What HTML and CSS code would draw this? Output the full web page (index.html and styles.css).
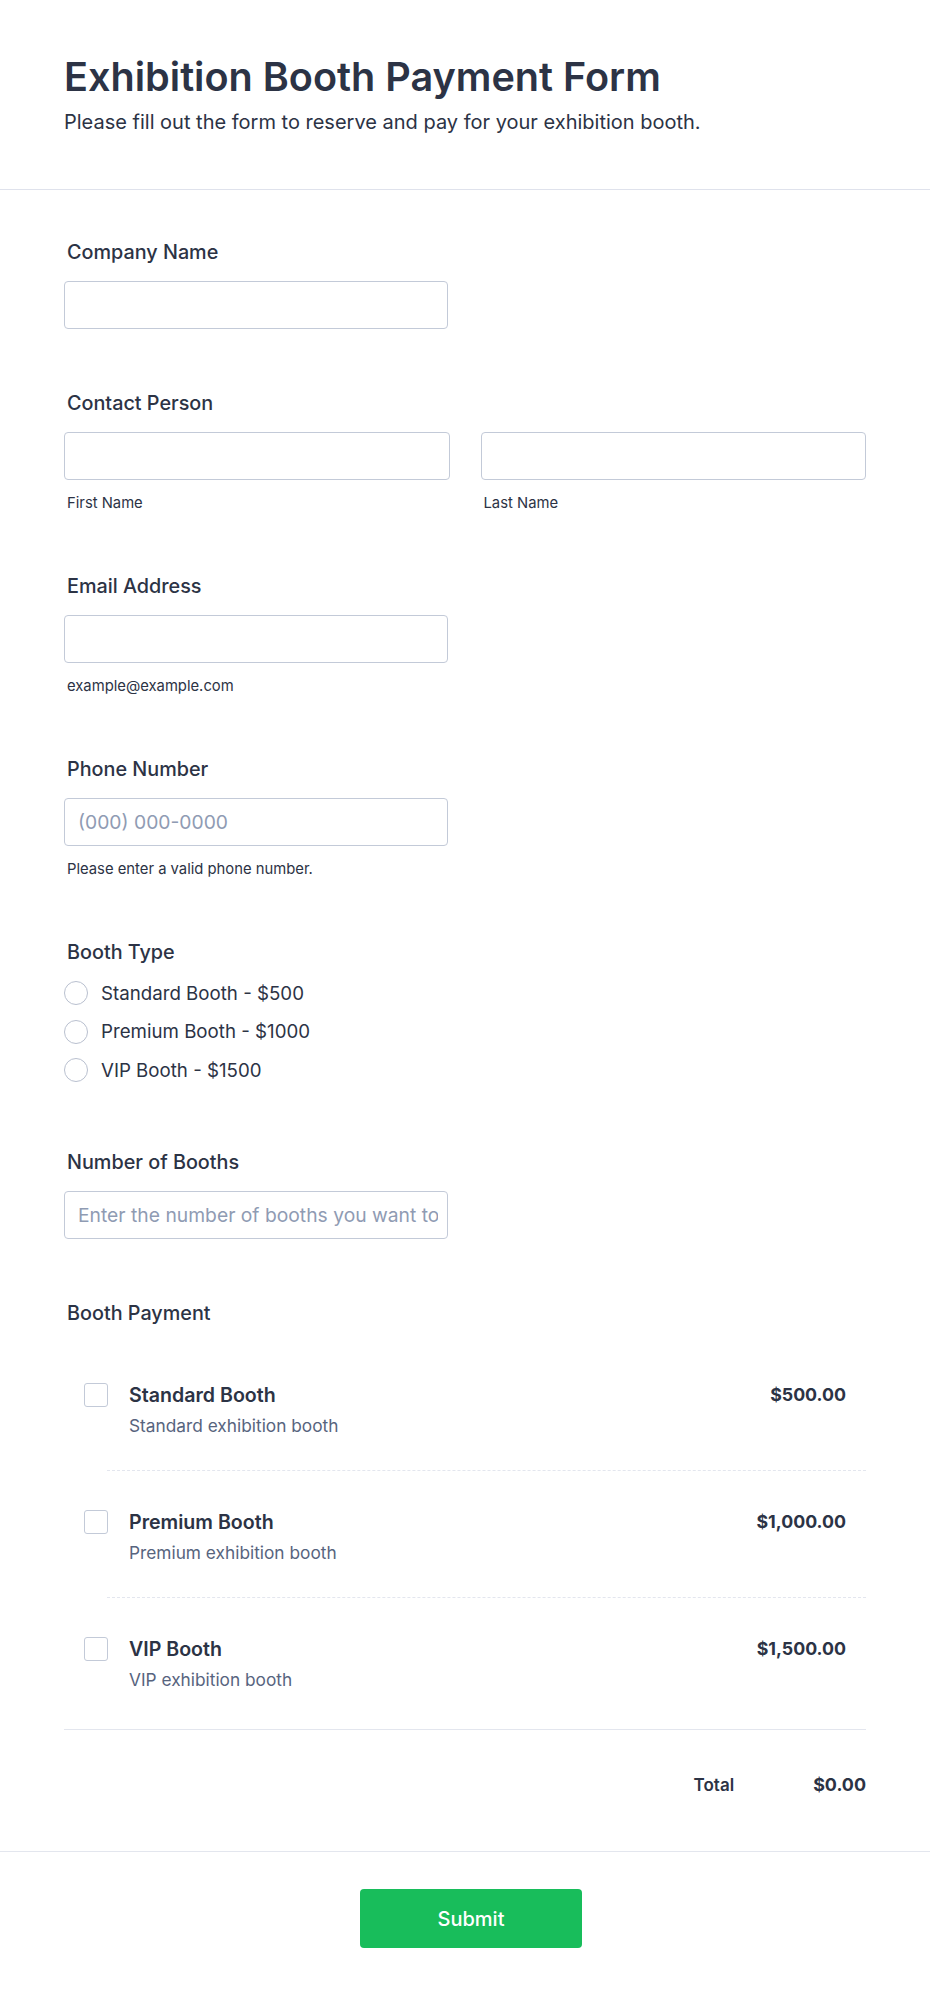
FILE: index.html
```html
<!DOCTYPE html>
<html lang="en">
<head>
<meta charset="utf-8">
<title>Exhibition Booth Payment Form</title>
<link rel="stylesheet" href="styles.css">
</head>
<body>
<header class="header">
  <div class="wrap">
    <h1 class="title">Exhibition Booth Payment Form</h1>
    <p class="subtitle">Please fill out the form to reserve and pay for your exhibition booth.</p>
  </div>
</header>
<main class="form">
  <div class="wrap">
    <div class="field">
      <label class="label">Company Name</label>
      <input class="input" type="text">
    </div>
    <div class="field">
      <label class="label">Contact Person</label>
      <div class="two">
        <div>
          <input class="input input-full" type="text">
          <span class="sub">First Name</span>
        </div>
        <div>
          <input class="input input-full" type="text">
          <span class="sub">Last Name</span>
        </div>
      </div>
    </div>
    <div class="field">
      <label class="label">Email Address</label>
      <input class="input" type="text">
      <span class="sub">example@example.com</span>
    </div>
    <div class="field">
      <label class="label">Phone Number</label>
      <input class="input" type="text" placeholder="(000) 000-0000">
      <span class="sub">Please enter a valid phone number.</span>
    </div>
    <div class="field field-radios">
      <label class="label label-tight">Booth Type</label>
      <div class="radio"><span class="radio-dot"></span><span>Standard Booth - $500</span></div>
      <div class="radio"><span class="radio-dot"></span><span>Premium Booth - $1000</span></div>
      <div class="radio"><span class="radio-dot"></span><span>VIP Booth - $1500</span></div>
    </div>
    <div class="field">
      <label class="label">Number of Booths</label>
      <input class="input input-num" type="text" placeholder="Enter the number of booths you want to reserve">
    </div>
    <div class="payment">
      <label class="label label-pay">Booth Payment</label>
      <div class="items">
        <div class="pitem">
          <span class="check"></span>
          <div class="pinfo">
            <div class="pname">Standard Booth</div>
            <div class="pdesc">Standard exhibition booth</div>
          </div>
          <div class="price">$500.00</div>
        </div>
        <div class="pitem">
          <span class="check"></span>
          <div class="pinfo">
            <div class="pname">Premium Booth</div>
            <div class="pdesc">Premium exhibition booth</div>
          </div>
          <div class="price">$1,000.00</div>
        </div>
        <div class="pitem">
          <span class="check"></span>
          <div class="pinfo">
            <div class="pname">VIP Booth</div>
            <div class="pdesc">VIP exhibition booth</div>
          </div>
          <div class="price">$1,500.00</div>
        </div>
      </div>
      <div class="total">
        <span class="total-label">Total</span>
        <span class="total-value">$0.00</span>
      </div>
    </div>
  </div>
</main>
<footer class="footer">
  <button class="submit" type="button">Submit</button>
</footer>
</body>
</html>
```

FILE: styles.css
```css
body {
  margin: 0;
  font-family: Inter, "Noto Sans", sans-serif;
  color: #2c3345;
  background: #ffffff;
}

.wrap {
  width: 802px;
  margin: 0 auto;
}

.header {
  padding: 53px 0 53px;
  border-bottom: 1px solid #dfe2ec;
}

.title {
  margin: 0;
  font-size: 39.6px;
  font-weight: 600;
  line-height: 48px;
}

.subtitle {
  margin: 7px 0 0;
  font-size: 20px;
  line-height: 28px;
}

.form {
  padding-top: 50px;
}

.field {
  margin-bottom: 62px;
}

.field-radios {
  margin-bottom: 60px;
}

.label {
  display: block;
  margin: 0 0 17px 3px;
  font-size: 19.8px;
  font-weight: 500;
  line-height: 24px;
}

.label-tight {
  margin-bottom: 10px;
}

.label-pay {
  margin-bottom: 19.5px;
}

.input {
  display: block;
  box-sizing: border-box;
  width: 384px;
  height: 48px;
  margin: 0;
  padding: 0 13px;
  border: 1px solid #c3cad8;
  border-radius: 4px;
  background: #fff;
  font-family: inherit;
  font-size: 19.3px;
  color: #2c3345;
}

.input-num {
  padding-right: 9px;
}

.input::placeholder {
  color: #8f9bb3;
}

.input-full {
  width: 100%;
}

.two {
  display: grid;
  grid-template-columns: 1fr 1fr;
  column-gap: 31px;
}

.sub {
  display: block;
  margin: 14px 0 0 3px;
  font-size: 14.8px;
  line-height: 18px;
  color: #2c3345;
}

.radio {
  display: flex;
  align-items: center;
  gap: 13px;
  height: 38.5px;
  font-size: 18.7px;
}

.radio-dot {
  flex: none;
  box-sizing: border-box;
  width: 24px;
  height: 24px;
  border: 1.5px solid #b9c0cf;
  border-radius: 50%;
  background: #fff;
}

.pitem {
  display: flex;
  align-items: flex-start;
  margin-left: 43px;
  padding: 39px 20px 33px 0;
  border-bottom: 1px dashed #e3e6ee;
}

.pitem:last-child {
  border-bottom: none;
}

.items {
  padding-bottom: 5px;
}

.check {
  flex: none;
  box-sizing: border-box;
  width: 24px;
  height: 24px;
  margin-left: -23px;
  border: 1px solid #c3cad8;
  border-radius: 3px;
  background: #fff;
}

.pinfo {
  flex: 1;
  margin-left: 21px;
}

.pname {
  font-size: 19.6px;
  font-weight: 600;
  line-height: 24px;
}

.pdesc {
  margin-top: 8px;
  font-size: 17.3px;
  line-height: 22px;
  color: #57647e;
}

.price {
  font-size: 17.8px;
  font-weight: 700;
  line-height: 24px;
}

.total {
  display: flex;
  justify-content: flex-end;
  align-items: center;
  gap: 79px;
  padding: 43px 0 54px;
  border-top: 1px solid #e3e6ee;
}

.total-label {
  font-size: 17px;
  font-weight: 600;
  line-height: 24px;
}

.total-value {
  font-size: 17.9px;
  font-weight: 700;
  line-height: 24px;
}

.footer {
  display: flex;
  justify-content: center;
  padding: 37px 0 50px;
  border-top: 1px solid #e3e6ee;
}

.submit {
  width: 222px;
  height: 59px;
  margin-left: 12px;
  border: none;
  border-radius: 4px;
  background: #18bd5b;
  color: #fff;
  font-family: inherit;
  font-size: 20px;
  font-weight: 500;
}
```
